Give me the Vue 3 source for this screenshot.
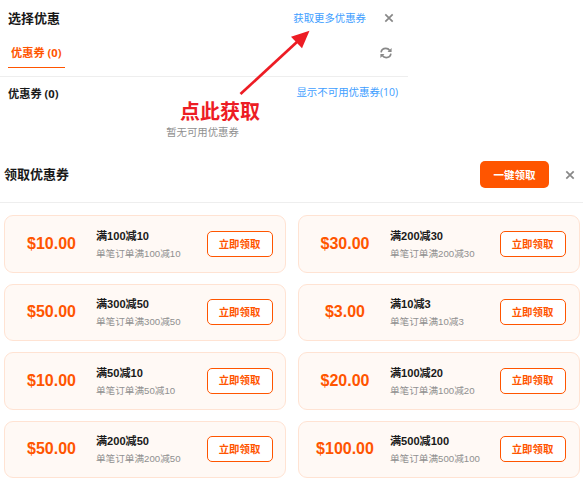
<script setup>
const coupons = [
  [100, 10], [200, 30], [300, 50], [10, 3],
  [50, 10], [100, 20], [200, 50], [500, 100],
]
</script>

<template>
  <main class="page">
    <section class="selector">
      <header class="top">
        <h2>选择优惠</h2>
        <a class="more">获取更多优惠券</a>
        <svg class="close" viewBox="0 0 10 10"><path d="M1.3 1.3 8.7 8.7M8.7 1.3 1.3 8.7" /></svg>
      </header>
      <nav class="tabs">
        <span class="tab">优惠券 (0)</span>
        <svg class="refresh" viewBox="0 0 12 12">
          <path class="line" d="M1.1 5.3C1.5 2.8 3.5 1.4 5.8 1.4 7.5 1.4 8.8 2.1 9.7 3.4M10.9 6.7C10.5 9.2 8.5 10.6 6.2 10.6 4.5 10.6 3.2 9.9 2.3 8.6" />
          <path class="tip" d="M11.6 .9V5H7.5ZM.4 11.1V7H4.5Z" />
        </svg>
      </nav>
      <div class="summary">
        <h3>优惠券 (0)</h3>
        <a>显示不可用优惠券(10)</a>
      </div>
      <p class="empty">暂无可用优惠券</p>
      <div class="callout">点此获取</div>
      <svg class="arrow" viewBox="0 0 80 70">
        <path class="shaft" d="M5.5 64 63 11" />
        <path class="head" d="M74.5 .8 67 18.3 56 6.7Z" />
      </svg>
    </section>

    <section class="claim">
      <header class="claim-head">
        <h2>领取优惠券</h2>
        <button class="all">一键领取</button>
        <svg class="close" viewBox="0 0 10 10"><path d="M1.3 1.3 8.7 8.7M8.7 1.3 1.3 8.7" /></svg>
      </header>
      <div class="grid">
        <article v-for="([min, off], i) in coupons" :key="i" class="card">
          <div class="price">${{ off }}.00</div>
          <div class="info">
            <div class="name">满{{ min }}减{{ off }}</div>
            <div class="desc">单笔订单满{{ min }}减{{ off }}</div>
          </div>
          <button class="get">立即领取</button>
        </article>
      </div>
    </section>
  </main>
</template>

<style>
body { background: #fff; overflow: hidden; }
</style>

<style scoped>
* { box-sizing: border-box; }
h2, h3, p { margin: 0; }
svg { display: block; flex: none; }
button { padding: 0; font-family: inherit; }
.page {
  width: 583px;
  height: 491px;
  overflow: hidden;
  color: #191919;
  font-family: "Liberation Sans", "Noto Sans CJK SC", sans-serif;
  white-space: nowrap;
}
.selector {
  position: relative;
  width: 408px;
  height: 147px;
  font-family: "Open Sans", "Noto Sans CJK SC", sans-serif;
}
.top { display: flex; align-items: center; height: 36px; padding: 0 14px 0 8px; }
.top h2 { margin-right: auto; font-size: 13px; line-height: 20px; font-weight: 700; }
.more { margin-right: 18px; font-size: 10.4px; line-height: 16px; color: #409eff; }
.close { width: 10px; height: 10px; fill: none; stroke: #888; stroke-width: 1.7; }
.tabs {
  display: flex;
  justify-content: space-between;
  height: 41px;
  padding: 0 16px 0 8px;
  border-bottom: 1px solid #eee;
}
.tab {
  width: 57px;
  height: 32px;
  padding-left: 3px;
  border-bottom: 1px solid #ff5500;
  color: #ff5500;
  font-size: 11.2px;
  line-height: 33px;
  font-weight: 700;
}
.refresh { width: 12px; height: 12px; margin-top: 11px; }
.refresh .line { fill: none; stroke: #888; stroke-width: 1.7; }
.refresh .tip { fill: #888; }
.summary { display: flex; justify-content: space-between; padding: 0 10px 0 8px; line-height: 32px; }
.summary h3 { font-size: 11.2px; line-height: 33px; font-weight: 700; }
.summary a { font-size: 10.45px; line-height: 30px; color: #409eff; }
.empty { margin-top: 14px; padding-right: 3px; text-align: center; color: #909090; font-size: 10.4px; line-height: 16px; }
.callout { position: absolute; left: 180px; top: 98px; color: #ed1c24; font-size: 20px; line-height: 28px; font-weight: 700; }
.arrow { position: absolute; left: 235px; top: 30px; width: 80px; height: 70px; }
.shaft { fill: none; stroke: #ed1c24; stroke-width: 2.7; }
.head { fill: #ed1c24; }
.claim-head {
  display: flex;
  align-items: center;
  height: 56px;
  padding: 0 8px 0 4px;
  border-bottom: 1px solid #eee;
}
.claim-head h2 { margin-right: auto; font-size: 13px; line-height: 20px; font-weight: 600; }
.all {
  width: 69px;
  height: 27px;
  margin-right: 16px;
  border: 0;
  border-radius: 5px;
  background: #ff5500;
  color: #fff;
  font-size: 10.5px;
  font-weight: 700;
}
.grid {
  display: grid;
  grid-template-columns: 282px 282px;
  grid-auto-rows: 57.4px;
  gap: 11px 12px;
  padding: 12.4px 0 0 4px;
}
.card {
  display: flex;
  align-items: center;
  padding: 0 12px;
  border: 1px solid #ffe3d3;
  border-radius: 9px;
  background: #fff9f5;
}
.card:nth-child(even) { padding: 0 13px 0 11.5px; }
.price { width: 69px; text-align: center; color: #ff5500; font-size: 16px; line-height: 20px; font-weight: 700; }
.info { flex: 1; padding: 1px 0 0 10px; }
.card:nth-child(even) .info { padding-left: 10.5px; }
.name { padding-top: 1px; font-size: 11.1px; line-height: 17px; font-weight: 700; }
.desc { color: #909090; font-size: 9.65px; line-height: 17px; }
.get {
  width: 66px;
  height: 26px;
  padding-right: 1px;
  border: 1px solid #ff5500;
  border-radius: 5px;
  background: #fff;
  color: #ff5500;
  font-size: 10.4px;
  line-height: 23px;
  font-weight: 600;
}
</style>
